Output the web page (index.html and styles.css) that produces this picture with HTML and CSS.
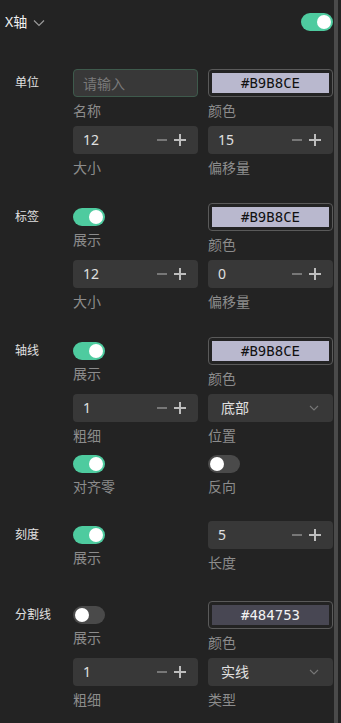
FILE: index.html
```html
<!DOCTYPE html>
<html lang="zh-CN">
<head>
    <meta charset="UTF-8">
    <meta name="viewport" content="width=device-width, initial-scale=1.0">
    <title>X轴设置</title>
    <link rel="stylesheet" href="styles.css">
</head>
<body>
    <div class="panel">
        <div class="panel-head">
            <div class="panel-title">
                X轴
                <svg class="caret" width="12" height="8" viewBox="0 0 12 8"><path d="M1 1.5 L6 6.5 L11 1.5" fill="none" stroke="#9a9a9a" stroke-width="1.2"/></svg>
            </div>
            <span class="switch on"></span>
        </div>

        <!-- 单位 -->
        <section class="group">
            <div class="group-label">单位</div>
            <div class="fields">
                <div class="cell">
                    <input class="text-input" type="text" placeholder="请输入">
                    <span class="sub">名称</span>
                </div>
                <div class="cell">
                    <div class="color-box"><span class="swatch">#B9B8CE</span></div>
                    <span class="sub">颜色</span>
                </div>
                <div class="cell">
                    <div class="number"><span>12</span><span class="steps"><i class="minus"></i><i class="plus"></i></span></div>
                    <span class="sub">大小</span>
                </div>
                <div class="cell">
                    <div class="number"><span>15</span><span class="steps"><i class="minus"></i><i class="plus"></i></span></div>
                    <span class="sub">偏移量</span>
                </div>
            </div>
        </section>

        <!-- 标签 -->
        <section class="group">
            <div class="group-label">标签</div>
            <div class="fields">
                <div class="cell">
                    <span class="switch on"></span>
                    <span class="sub">展示</span>
                </div>
                <div class="cell">
                    <div class="color-box"><span class="swatch">#B9B8CE</span></div>
                    <span class="sub">颜色</span>
                </div>
                <div class="cell">
                    <div class="number"><span>12</span><span class="steps"><i class="minus"></i><i class="plus"></i></span></div>
                    <span class="sub">大小</span>
                </div>
                <div class="cell">
                    <div class="number"><span>0</span><span class="steps"><i class="minus"></i><i class="plus"></i></span></div>
                    <span class="sub">偏移量</span>
                </div>
            </div>
        </section>

        <!-- 轴线 -->
        <section class="group">
            <div class="group-label">轴线</div>
            <div class="fields">
                <div class="cell">
                    <span class="switch on"></span>
                    <span class="sub">展示</span>
                </div>
                <div class="cell">
                    <div class="color-box"><span class="swatch">#B9B8CE</span></div>
                    <span class="sub">颜色</span>
                </div>
                <div class="cell">
                    <div class="number"><span>1</span><span class="steps"><i class="minus"></i><i class="plus"></i></span></div>
                    <span class="sub">粗细</span>
                </div>
                <div class="cell">
                    <div class="select"><span>底部</span><svg width="10" height="6" viewBox="0 0 10 6"><path d="M1 1 L5 5 L9 1" fill="none" stroke="#777" stroke-width="1.1"/></svg></div>
                    <span class="sub">位置</span>
                </div>
                <div class="cell pad">
                    <span class="switch on"></span>
                    <span class="sub">对齐零</span>
                </div>
                <div class="cell pad">
                    <span class="switch"></span>
                    <span class="sub">反向</span>
                </div>
            </div>
        </section>

        <!-- 刻度 -->
        <section class="group tight">
            <div class="group-label">刻度</div>
            <div class="fields">
                <div class="cell">
                    <span class="switch on"></span>
                    <span class="sub">展示</span>
                </div>
                <div class="cell">
                    <div class="number"><span>5</span><span class="steps"><i class="minus"></i><i class="plus"></i></span></div>
                    <span class="sub">长度</span>
                </div>
            </div>
        </section>

        <!-- 分割线 -->
        <section class="group last">
            <div class="group-label">分割线</div>
            <div class="fields">
                <div class="cell">
                    <span class="switch"></span>
                    <span class="sub">展示</span>
                </div>
                <div class="cell">
                    <div class="color-box"><span class="swatch dark">#484753</span></div>
                    <span class="sub">颜色</span>
                </div>
                <div class="cell">
                    <div class="number"><span>1</span><span class="steps"><i class="minus"></i><i class="plus"></i></span></div>
                    <span class="sub">粗细</span>
                </div>
                <div class="cell">
                    <div class="select"><span>实线</span><svg width="10" height="6" viewBox="0 0 10 6"><path d="M1 1 L5 5 L9 1" fill="none" stroke="#777" stroke-width="1.1"/></svg></div>
                    <span class="sub">类型</span>
                </div>
            </div>
        </section>
    </div>

    <div class="scrollbar"></div>
</body>
</html>
```

FILE: styles.css
```css
/* Base */
* {
    margin: 0;
    padding: 0;
    box-sizing: border-box;
}

body {
    background: #232323;
    color: #e6e6e6;
    font-family: 'Noto Sans', 'Noto Sans CJK SC', sans-serif;
    font-size: 14px;
    width: 341px;
    height: 723px;
    overflow: hidden;
    position: relative;
}

.panel {
    width: 333px;
}

/* Header */
.panel-head {
    height: 44px;
    display: flex;
    align-items: center;
    justify-content: space-between;
    padding-left: 5px;
}

.panel-title {
    display: flex;
    align-items: center;
    gap: 6px;
    font-size: 14px;
    line-height: 20px;
    color: #f0f0f0;
}

.caret {
    margin-top: 1px;
}

/* Switch */
.switch {
    display: block;
    position: relative;
    width: 32px;
    height: 18px;
    border-radius: 9px;
    background: #4a4a4a;
}

.switch::after {
    content: '';
    position: absolute;
    top: 2px;
    left: 2px;
    width: 14px;
    height: 14px;
    border-radius: 50%;
    background: #fff;
}

.switch.on {
    background: #4ecb9f;
}

.switch.on::after {
    left: 16px;
}

/* Groups */
.group {
    display: flex;
    padding-left: 15px;
    margin-top: 25px;
}

.group.tight {
    margin-top: 24px;
}

.group.last {
    margin-top: 28px;
}

.group-label {
    width: 58px;
    flex-shrink: 0;
    font-size: 12px;
    line-height: 28px;
    color: #e0e0e0;
}

.fields {
    display: grid;
    grid-template-columns: 125px 125px;
    column-gap: 10px;
    row-gap: 5px;
    align-items: center;
}

.cell {
    display: flex;
    flex-direction: column;
    align-items: flex-start;
}

.cell.pad {
    padding-top: 4px;
}

.sub {
    margin-top: 4px;
    font-size: 14px;
    line-height: 20px;
    color: #8c8c8c;
}

/* Inputs */
.text-input {
    width: 125px;
    height: 28px;
    background: #383838;
    border: 1px solid #3e5a4c;
    border-radius: 4px;
    padding: 0 9px;
    font-family: inherit;
    font-size: 14px;
    color: #e0e0e0;
    outline: none;
}

.text-input::placeholder {
    color: #7a7a7a;
}

.color-box {
    width: 125px;
    height: 28px;
    border: 1px solid #5a5a5a;
    border-radius: 4px;
    padding: 3px;
}

.swatch {
    display: block;
    height: 20px;
    background: #b9b8ce;
    color: #111;
    text-align: center;
    font-family: 'DejaVu Sans Mono', 'Liberation Mono', monospace;
    font-size: 14px;
    line-height: 20px;
}

.swatch.dark {
    background: #484753;
    color: #f2f2f2;
}

.number,
.select {
    width: 125px;
    height: 28px;
    background: #383838;
    border-radius: 4px;
    display: flex;
    align-items: center;
    justify-content: space-between;
    padding: 0 12px 0 10px;
    line-height: 20px;
    color: #e0e0e0;
}

.select {
    padding: 0 14px 0 13px;
}

.steps {
    display: flex;
    align-items: center;
    gap: 7px;
}

.steps i {
    display: block;
    position: relative;
    height: 12px;
}

.minus {
    width: 10px;
}

.minus::before {
    content: '';
    position: absolute;
    left: 0;
    top: 5px;
    width: 10px;
    height: 2px;
    background: #777;
}

.plus {
    width: 12px;
}

.plus::before,
.plus::after {
    content: '';
    position: absolute;
    background: #bdbdbd;
}

.plus::before {
    left: 0;
    top: 5px;
    width: 12px;
    height: 2px;
}

.plus::after {
    left: 5px;
    top: 0;
    width: 2px;
    height: 12px;
}

/* Scrollbar overlay */
.scrollbar {
    position: absolute;
    top: 0;
    right: 3px;
    width: 4px;
    height: 723px;
    background: #4a4a4a;
}
```
